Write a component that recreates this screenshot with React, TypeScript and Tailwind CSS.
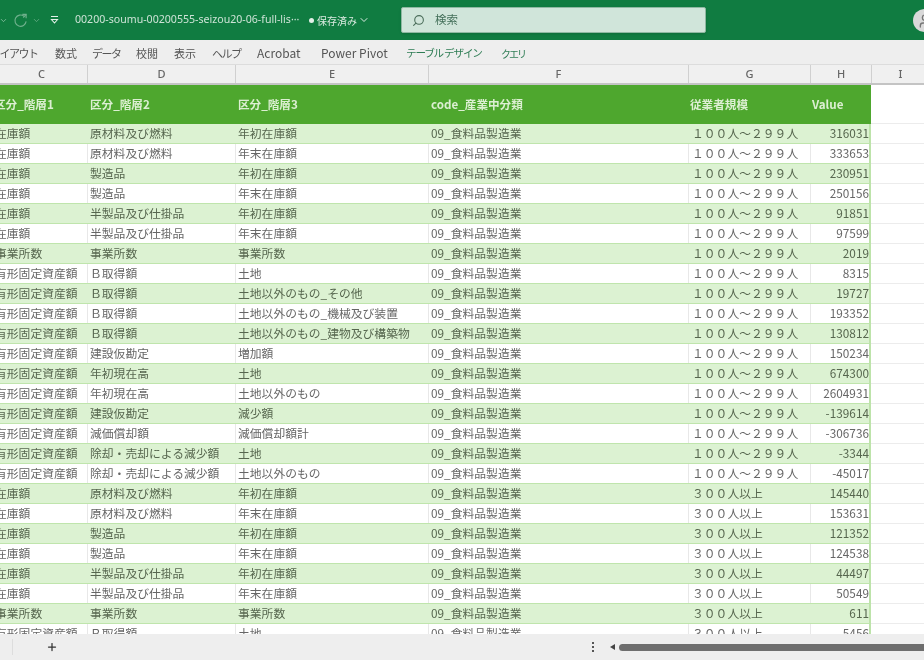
import { Search, ChevronDown, Plus, User } from "lucide-react";

const font = { fontFamily: '"Noto Sans CJK JP", "Noto Sans", sans-serif' };
const A = "１００人～２９９人";
const B = "３００人以上";
const K = "有形固定資産額";
const Z = "在庫額";

const rows: [string, string, string, string, string][] = [
  [Z, "原材料及び燃料", "年初在庫額", A, "316031"],
  [Z, "原材料及び燃料", "年末在庫額", A, "333653"],
  [Z, "製造品", "年初在庫額", A, "230951"],
  [Z, "製造品", "年末在庫額", A, "250156"],
  [Z, "半製品及び仕掛品", "年初在庫額", A, "91851"],
  [Z, "半製品及び仕掛品", "年末在庫額", A, "97599"],
  ["事業所数", "事業所数", "事業所数", A, "2019"],
  [K, "Ｂ取得額", "土地", A, "8315"],
  [K, "Ｂ取得額", "土地以外のもの_その他", A, "19727"],
  [K, "Ｂ取得額", "土地以外のもの_機械及び装置", A, "193352"],
  [K, "Ｂ取得額", "土地以外のもの_建物及び構築物", A, "130812"],
  [K, "建設仮勘定", "増加額", A, "150234"],
  [K, "年初現在高", "土地", A, "674300"],
  [K, "年初現在高", "土地以外のもの", A, "2604931"],
  [K, "建設仮勘定", "減少額", A, "-139614"],
  [K, "減価償却額", "減価償却額計", A, "-306736"],
  [K, "除却・売却による減少額", "土地", A, "-3344"],
  [K, "除却・売却による減少額", "土地以外のもの", A, "-45017"],
  [Z, "原材料及び燃料", "年初在庫額", B, "145440"],
  [Z, "原材料及び燃料", "年末在庫額", B, "153631"],
  [Z, "製造品", "年初在庫額", B, "121352"],
  [Z, "製造品", "年末在庫額", B, "124538"],
  [Z, "半製品及び仕掛品", "年初在庫額", B, "44497"],
  [Z, "半製品及び仕掛品", "年末在庫額", B, "50549"],
  ["事業所数", "事業所数", "事業所数", B, "611"],
  [K, "Ｂ取得額", "土地", B, "5456"],
];

const tabs: [string, string, string][] = [
  ["レイアウト", "w-[65px]", "text-[11px] tracking-[-1.5px]"],
  ["数式", "w-[37px]", "text-[11px]"],
  ["データ", "w-[44px]", "text-[11px] tracking-[-1.5px]"],
  ["校閲", "w-[38px]", "text-[11px]"],
  ["表示", "w-[38px]", "text-[11px]"],
  ["ヘルプ", "w-[45px]", "text-[11px] tracking-[-1.5px]"],
  ["Acrobat", "w-[64px]", "text-[12px]"],
  ["Power Pivot", "w-[85px]", "text-[12px]"],
];

function ColHead({ w, label }: { w: string; label: string }) {
  return (
    <div className={`${w} shrink-0 flex items-center justify-center border-r border-[#d0d0d0] text-[11px] font-medium text-[#666]`}>
      {label}
    </div>
  );
}

function Row({ r, odd }: { r: [string, string, string, string, string]; odd: boolean }) {
  const bg = odd ? "bg-[#dcf2d2] text-[#56664e]" : "bg-white text-[#666666]";
  const line = odd ? "border-transparent" : "border-[#e8e8e8]";
  return (
    <div className="flex h-5 shrink-0">
      <div className={`flex ${bg} border-b border-[#bfe5ac] text-[11.8px] leading-[18px] w-[875px] shrink-0 border-r-2 border-r-[#bde3aa]`}>
        <div className={`w-[92px] shrink-0 border-r ${line} whitespace-nowrap overflow-hidden`}>
          <span className="block -ml-[1px]">{r[0]}</span>
        </div>
        <div className={`w-[148px] shrink-0 border-r ${line} pl-[2px] whitespace-nowrap overflow-hidden`}>{r[1]}</div>
        <div className={`w-[193px] shrink-0 border-r ${line} pl-[2px] whitespace-nowrap overflow-hidden`}>{r[2]}</div>
        <div className={`w-[260px] shrink-0 border-r ${line} pl-[2px] whitespace-nowrap overflow-hidden`}>09_食料品製造業</div>
        <div className={`w-[122px] shrink-0 border-r ${line} pl-[3px] whitespace-nowrap overflow-hidden`}>{r[3]}</div>
        <div className="flex-1 text-right whitespace-nowrap">{r[4]}</div>
      </div>
      <div className="flex-1 bg-white border-b border-[#ececec]" />
    </div>
  );
}

export default function App() {
  return (
    <div style={font} className="w-[924px] h-[660px] overflow-hidden flex flex-col bg-white blur-[0.45px]">
      {/* Title bar */}
      <div className="h-10 shrink-0 bg-[#107c41] flex items-center text-[#cfe5d8] relative">
        <ChevronDown className="w-[9px] h-[9px] -ml-[1px] opacity-70" />
        <svg className="ml-[5px] opacity-50" width="15" height="15" viewBox="0 0 16 16" fill="none" stroke="#cfe5d8" strokeWidth="1.2">
          <path d="M10 1.5h4v4" />
          <path d="M14 1.5 11 5" />
          <path d="M11.8 3.5A6 6 0 1 0 14 9" />
        </svg>
        <ChevronDown className="w-[9px] h-[9px] ml-[4px] opacity-50" />
        <svg className="ml-[9px]" width="9" height="10" viewBox="0 0 9 10" fill="none" stroke="#e3f0e8" strokeWidth="1.1">
          <path d="M1 1.5h7M1.5 4.5h6L4.5 8z" />
        </svg>
        <span className="ml-[16px] w-[229px] text-[10.6px] whitespace-nowrap text-[#cde3d6]" style={{ fontFamily: '"Noto Sans", sans-serif' }}>
          00200-soumu-00200555-seizou20-06-full-lis···
        </span>
        <span className="ml-[5px] w-[5px] h-[5px] rounded-full bg-[#e3f0e8]" />
        <span className="ml-[3px] text-[10px] text-[#dcebe2] whitespace-nowrap">保存済み</span>
        <ChevronDown className="w-[12px] h-[12px] ml-[1px] text-[#dcebe2]" />
        <div className="ml-[31px] w-[305px] h-[26px] bg-[#d0e5da] border border-[#8fb8a2] rounded-[2px] flex items-center text-[#4b6d5a] shadow-sm">
          <Search className="w-[13px] h-[13px] ml-[10px] -scale-x-100" />
          <span className="ml-[10px] text-[11.5px] text-[#44705a]">検索</span>
        </div>
        <div className="absolute right-[-12px] top-[9px] w-[23px] h-[23px] rounded-full bg-[#d9d9d9] flex items-center justify-center">
          <User className="w-4 h-4 text-[#777]" />
        </div>
      </div>

      {/* Ribbon tabs */}
      <div className="h-[25px] shrink-0 bg-[#eeeeee] flex items-center pt-[2px] text-[#555] border-b border-[#dcdcdc] whitespace-nowrap">
        <div className="flex items-center -ml-[10px]">
          {tabs.map(([t, w, s]) => (
            <span key={t} className={`${w} ${s} shrink-0`}>{t}</span>
          ))}
          <span className="w-[95px] shrink-0 text-[#2f7d55] text-[10.6px] tracking-[-1.2px]">テーブル デザイン</span>
          <span className="shrink-0 text-[#2f7d55] text-[10px] tracking-[-2px]">クエリ</span>
        </div>
      </div>

      {/* Column headers */}
      <div className="h-[20px] shrink-0 bg-[#f0f0f0] flex -ml-[4px] border-b-2 border-[#c4c4c4]" style={{ fontFamily: '"Noto Sans", sans-serif' }}>
        <ColHead w="w-[92px]" label="C" />
        <ColHead w="w-[148px]" label="D" />
        <ColHead w="w-[193px]" label="E" />
        <ColHead w="w-[260px]" label="F" />
        <ColHead w="w-[122px]" label="G" />
        <ColHead w="w-[61px]" label="H" />
        <ColHead w="w-[58px]" label="I" />
      </div>

      {/* Sheet */}
      <div className="flex-1 min-h-0 overflow-hidden -ml-[4px] flex flex-col w-[928px]">
        <div className="flex h-[39px] shrink-0">
          <div className="flex w-[875px] shrink-0 bg-[#4ea72e] text-[#dcefd2] font-bold text-[11.6px] items-center whitespace-nowrap">
            <div className="w-[92px] shrink-0 overflow-hidden">
              <span className="block -ml-[2px]">区分_階層1</span>
            </div>
            <div className="w-[148px] shrink-0 pl-[2px]">区分_階層2</div>
            <div className="w-[193px] shrink-0 pl-[2px]">区分_階層3</div>
            <div className="w-[260px] shrink-0 pl-[2px]">code_産業中分類</div>
            <div className="w-[122px] shrink-0 pl-[1px]">従業者規模</div>
            <div className="flex-1 pl-[1px]">Value</div>
          </div>
          <div className="flex-1 bg-white border-b border-[#ececec]" />
        </div>
        {rows.map((r, i) => (
          <Row key={i} r={r} odd={i % 2 === 0} />
        ))}
      </div>

      {/* Footer */}
      <div className="h-[26px] shrink-0 bg-[#eeeeee] flex items-center relative">
        <div className="w-px h-4 bg-[#dddddd] ml-[12px]" />
        <Plus strokeWidth={2.5} className="w-[12px] h-[12px] ml-[33px] text-[#333]" />
        <div className="ml-[534px] flex flex-col gap-[2px]">
          <span className="w-[2px] h-[2px] bg-[#555]" />
          <span className="w-[2px] h-[2px] bg-[#555]" />
          <span className="w-[2px] h-[2px] bg-[#555]" />
        </div>
        <div className="ml-[16px] w-0 h-0 border-y-[3.5px] border-y-transparent border-r-[5px] border-r-[#444]" />
        <div className="ml-[4px] flex-1 h-[7px] bg-[#6e6e6e] rounded-l-full" />
      </div>
    </div>
  );
}
